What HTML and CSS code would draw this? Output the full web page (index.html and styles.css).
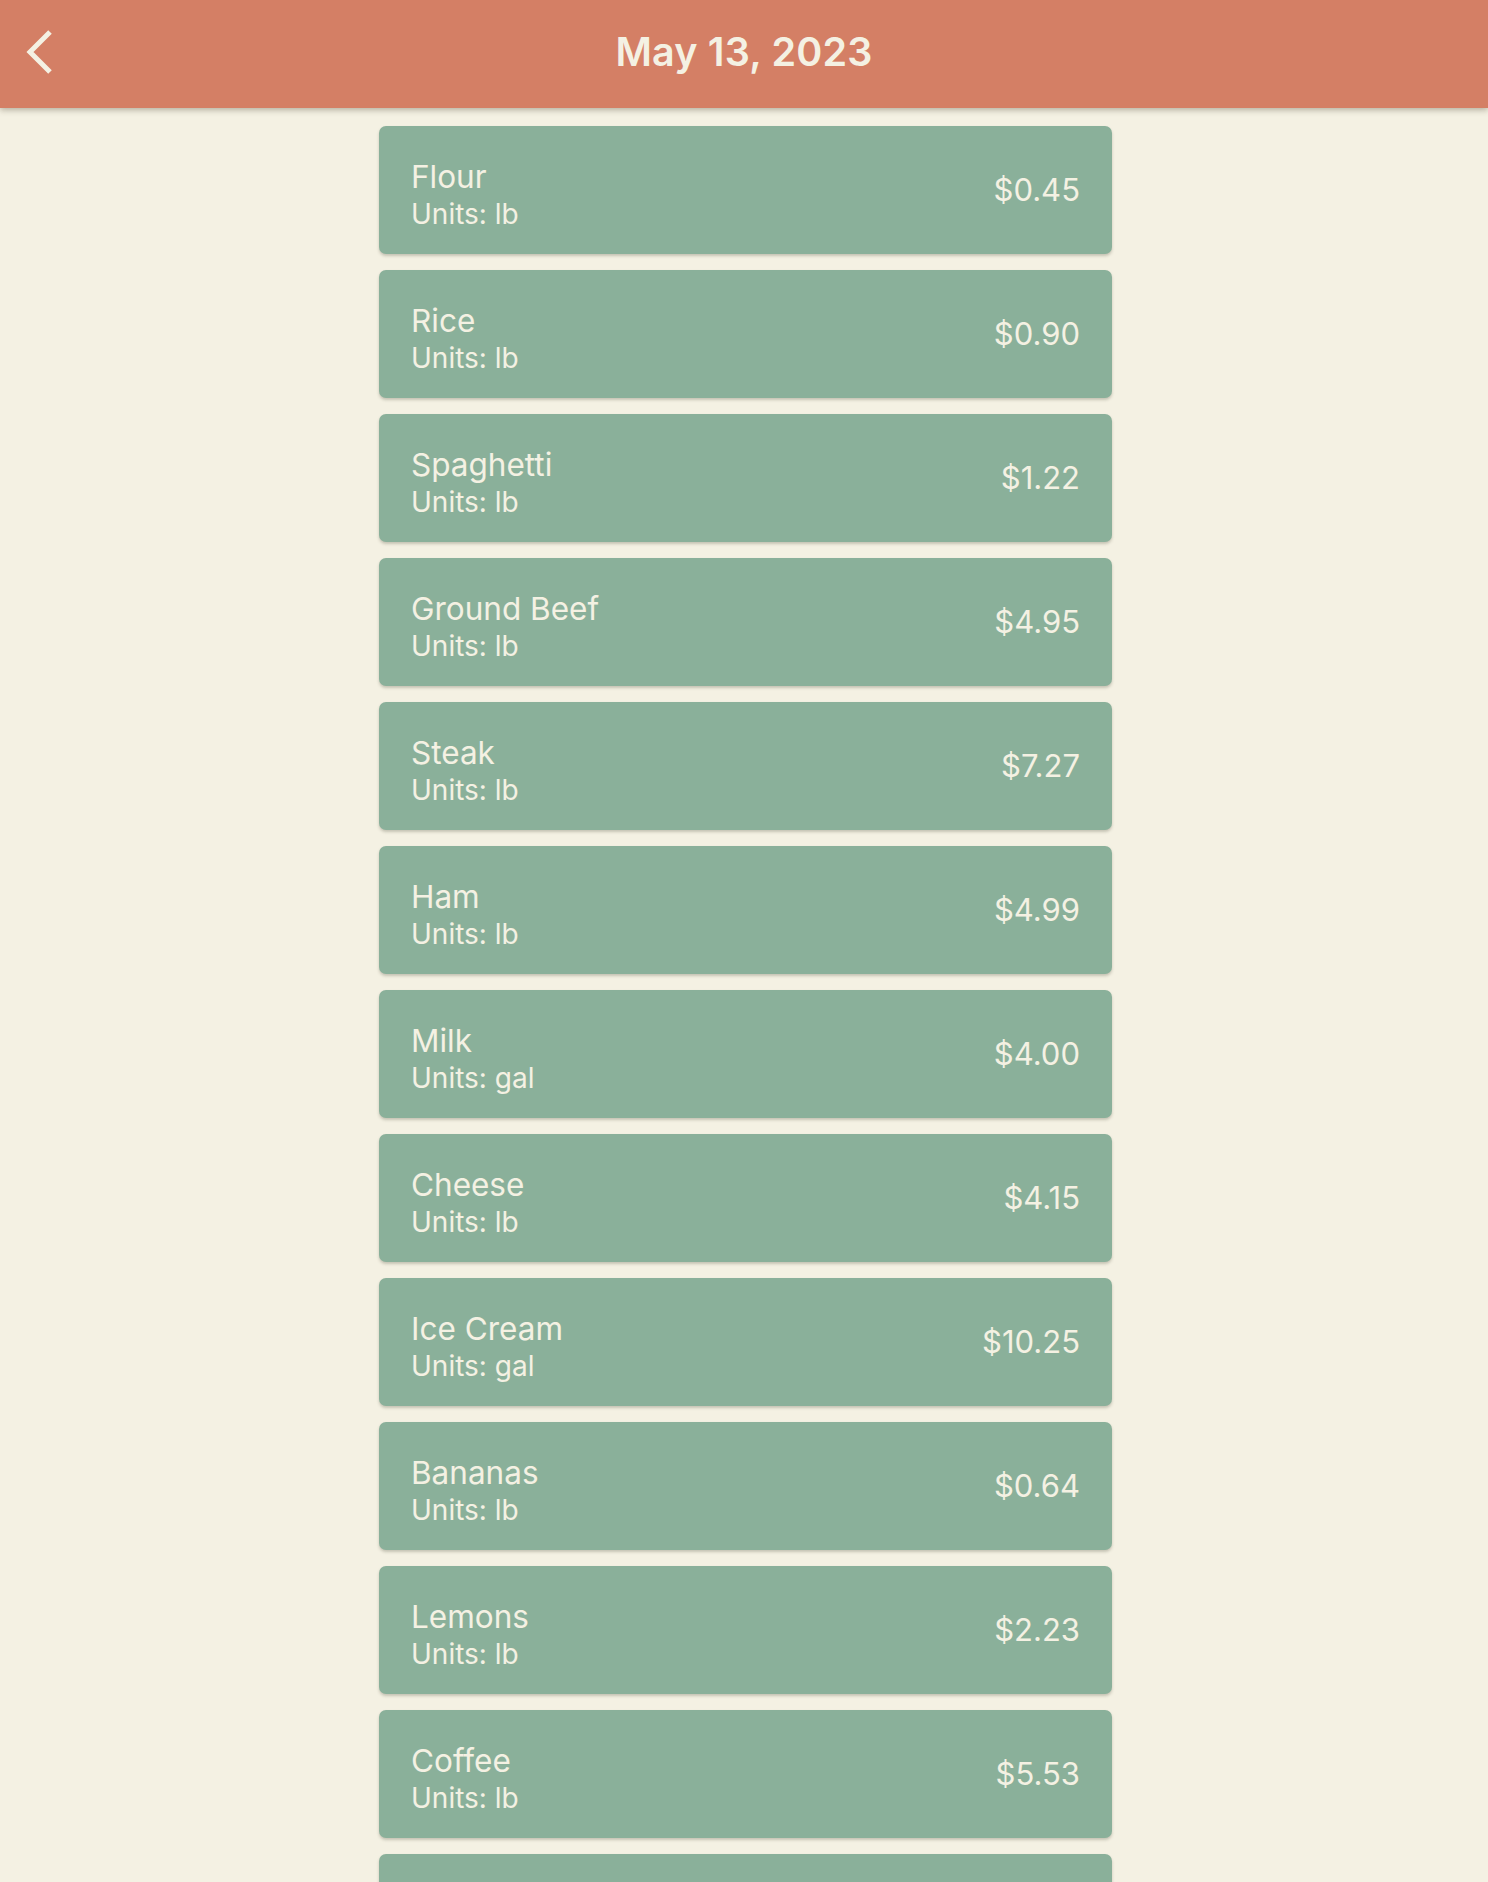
FILE: index.html
```html
<!DOCTYPE html>
<html lang="en">
<head>
<meta charset="utf-8">
<title>May 13, 2023</title>
<link rel="stylesheet" href="styles.css">
</head>
<body>
<header class="topbar">
  <button class="back" aria-label="Back">
    <svg width="32" height="46" viewBox="0 0 32 46"><polyline points="27,3 7,23 27,43" fill="none" stroke="#F4F1E3" stroke-width="5"/></svg>
  </button>
  <h1 class="title">May 13, 2023</h1>
</header>
<main class="list">
  <div class="card"><div class="info"><div class="name">Flour</div><div class="units">Units: lb</div></div><div class="price">$0.45</div></div>
  <div class="card"><div class="info"><div class="name">Rice</div><div class="units">Units: lb</div></div><div class="price">$0.90</div></div>
  <div class="card"><div class="info"><div class="name">Spaghetti</div><div class="units">Units: lb</div></div><div class="price">$1.22</div></div>
  <div class="card"><div class="info"><div class="name">Ground Beef</div><div class="units">Units: lb</div></div><div class="price">$4.95</div></div>
  <div class="card"><div class="info"><div class="name">Steak</div><div class="units">Units: lb</div></div><div class="price">$7.27</div></div>
  <div class="card"><div class="info"><div class="name">Ham</div><div class="units">Units: lb</div></div><div class="price">$4.99</div></div>
  <div class="card"><div class="info"><div class="name">Milk</div><div class="units">Units: gal</div></div><div class="price">$4.00</div></div>
  <div class="card"><div class="info"><div class="name">Cheese</div><div class="units">Units: lb</div></div><div class="price">$4.15</div></div>
  <div class="card"><div class="info"><div class="name">Ice Cream</div><div class="units">Units: gal</div></div><div class="price">$10.25</div></div>
  <div class="card"><div class="info"><div class="name">Bananas</div><div class="units">Units: lb</div></div><div class="price">$0.64</div></div>
  <div class="card"><div class="info"><div class="name">Lemons</div><div class="units">Units: lb</div></div><div class="price">$2.23</div></div>
  <div class="card"><div class="info"><div class="name">Coffee</div><div class="units">Units: lb</div></div><div class="price">$5.53</div></div>
  <div class="card"></div>
</main>
</body>
</html>
```

FILE: styles.css
```css
* { box-sizing: border-box; }
html, body {
  margin: 0;
  background: #F4F1E3;
  font-family: Inter, "Noto Sans", "Liberation Sans", sans-serif;
  color: #F4F1E3;
}
.topbar {
  position: relative;
  height: 108px;
  background: #D47F65;
  display: flex;
  align-items: center;
  justify-content: center;
  box-shadow: 0 2px 6px rgba(60, 50, 30, 0.35);
  z-index: 1;
}
.back {
  position: absolute;
  left: 23px;
  top: 29px;
  background: none;
  border: 0;
  padding: 0;
  width: 32px;
  height: 46px;
  display: block;
}
.back svg { display: block; }
.title {
  margin: 0 0 5px;
  font-size: 39.5px;
  font-weight: 600;
  letter-spacing: 0.2px;
  color: #F4F1E3;
}
.list {
  display: flex;
  flex-direction: column;
  align-items: center;
  gap: 16px;
  padding: 18px 0 24px 3px;
}
.card {
  width: 733px;
  height: 128px;
  flex-shrink: 0;
  background: #8AB09A;
  border-radius: 7px;
  box-shadow: 0 2px 3px rgba(60, 60, 40, 0.25);
  display: flex;
  align-items: center;
  justify-content: space-between;
  padding: 0 32px 0 32px;
}
.info {
  padding-top: 12px;
}
.name {
  font-size: 31.5px;
  line-height: 36px;
}
.units {
  font-size: 28px;
  line-height: 38px;
}
.price {
  font-size: 31px;
  line-height: 36px;
}
```
